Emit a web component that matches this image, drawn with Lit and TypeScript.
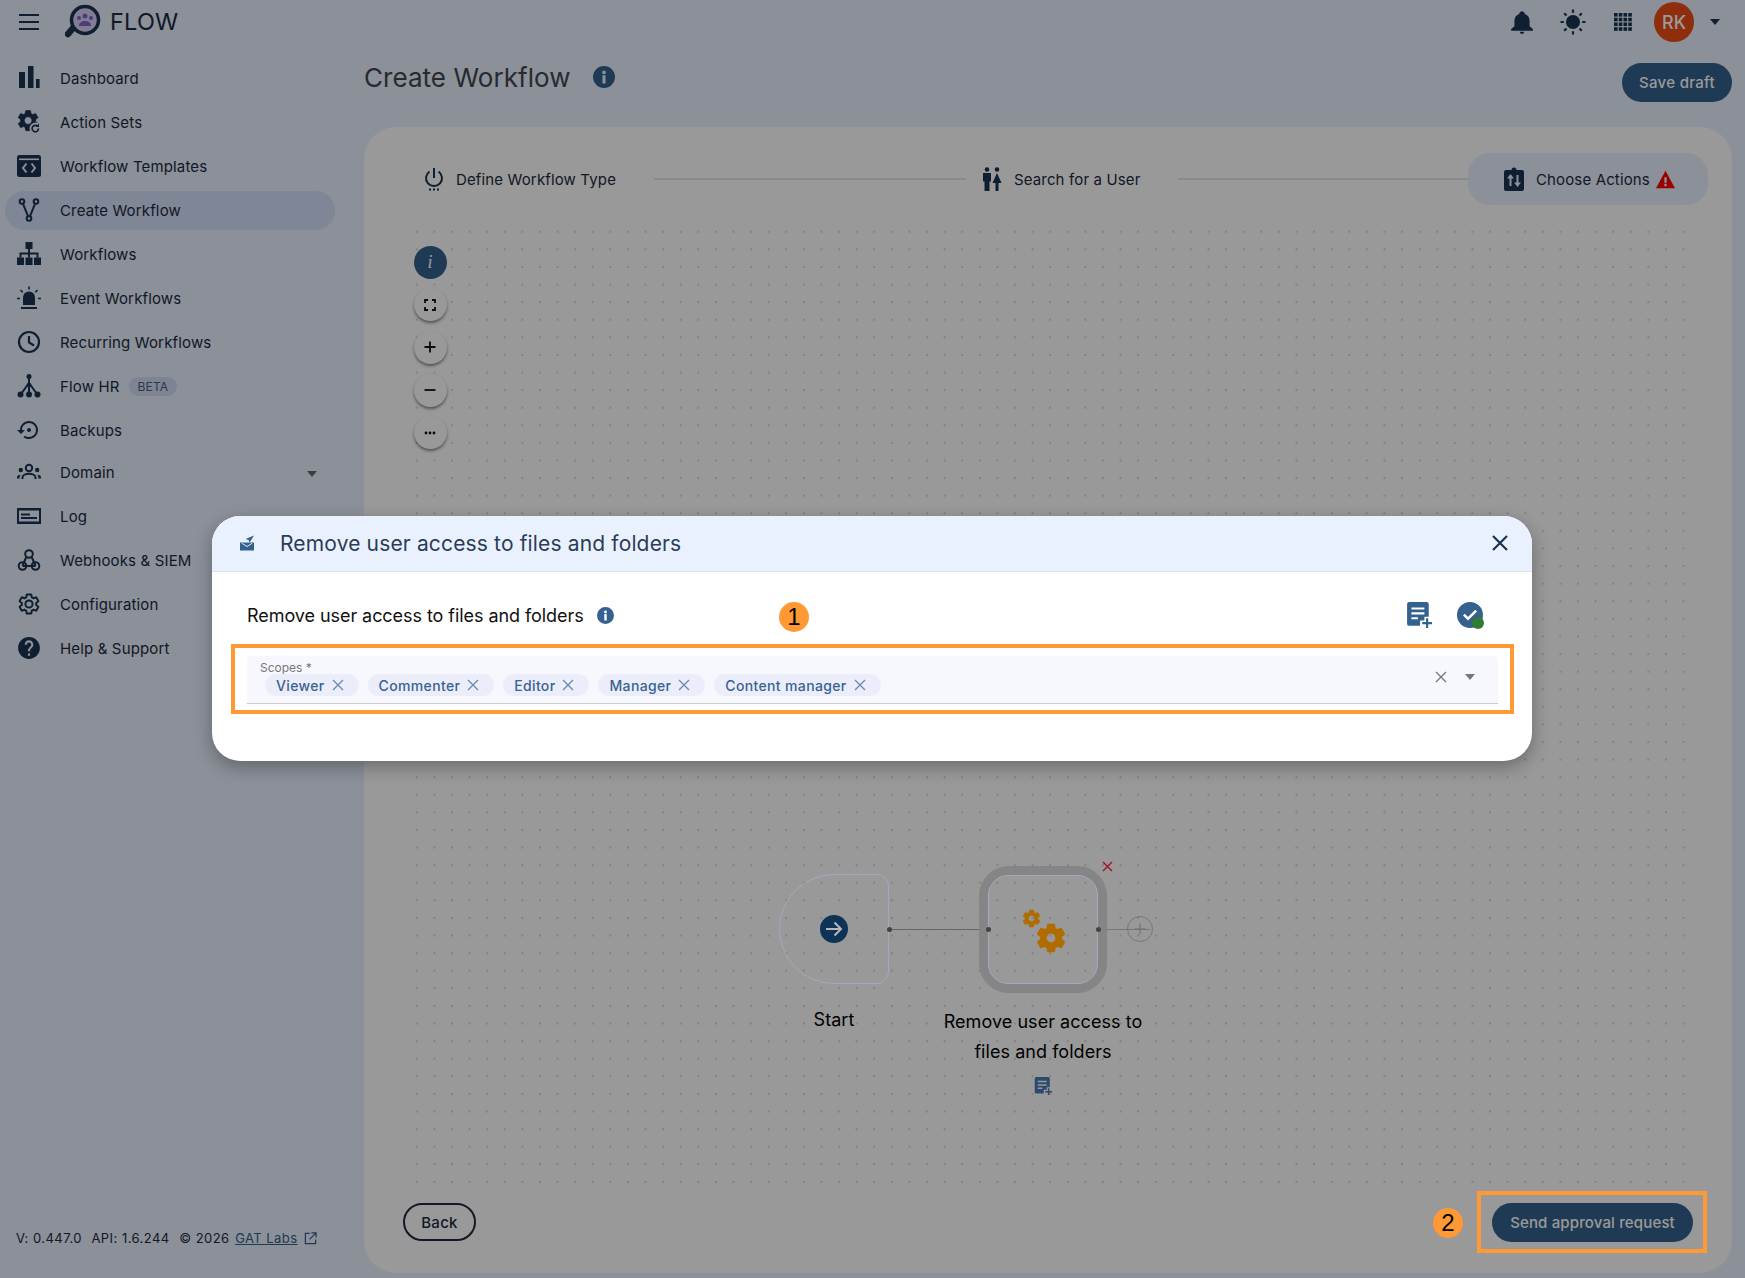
import { LitElement, html, css } from 'lit';
import { customElement } from 'lit/decorators.js';

const GEAR = 'M19.14 12.94c.04-.3.06-.61.06-.94 0-.32-.02-.64-.07-.94l2.03-1.58c.18-.14.23-.41.12-.61l-1.92-3.32c-.12-.22-.37-.29-.59-.22l-2.39.96c-.5-.38-1.03-.7-1.62-.94l-.36-2.54c-.04-.24-.24-.41-.48-.41h-3.84c-.24 0-.43.17-.47.41l-.36 2.54c-.59.24-1.13.57-1.62.94l-2.39-.96c-.22-.08-.47 0-.59.22L2.74 8.87c-.12.21-.08.47.12.61l2.03 1.58c-.05.3-.09.63-.09.94s.02.64.07.94l-2.03 1.58c-.18.14-.23.41-.12.61l1.92 3.32c.12.22.37.29.59.22l2.39-.96c.5.38 1.03.7 1.62.94l.36 2.54c.05.24.24.41.48.41h3.84c.24 0 .44-.17.47-.41l.36-2.54c.59-.24 1.13-.56 1.62-.94l2.39.96c.22.08.47 0 .59-.22l1.92-3.32c.12-.22.07-.47-.12-.61l-2.01-1.58zM12 15.6c-1.98 0-3.6-1.62-3.6-3.6s1.62-3.6 3.6-3.6 3.6 1.62 3.6 3.6-1.62 3.6-3.6 3.6z';
const DOC_PLUS = 'M3 0h16a2 2 0 0 1 2 2v11.500h-4V17h-4v5H3a2 2 0 0 1-2-2V2a2 2 0 0 1 2-2zm2 5v2h12V5H5zm0 4.500v2h12v-2H5zM5 14v2h6v-2H5z';
const PLUS = 'M18.500 15h2v3.500H24v2h-3.500V24h-2v-3.500H15v-2h3.500z';

const icon = (content: unknown, cls = 'ico') =>
  html`<svg class=${cls} viewBox="0 0 24 24" fill="currentColor">${content}</svg>`;

const navItems = [
  { label: 'Dashboard', icon: icon(html`<svg width="24" height="24"><rect x="2" y="6" width="6" height="16"/><rect x="11" y="0" width="5.500" height="22"/><rect x="19" y="13" width="3.600" height="9"/></svg>`) },
  { label: 'Action Sets', icon: icon(html`<svg viewBox="0 0 24 24"><g transform="translate(-1.500 -2) scale(1.050)"><path fill-rule="evenodd" stroke="currentColor" stroke-width=".6" d=${GEAR}/></g><circle cx="18.500" cy="18.500" r="6" fill="#e8f0ff"/><path d="M21.500 18.500a3.200 3.200 0 1 1-1-2.300" fill="none" stroke="currentColor" stroke-width="1.600"/><path d="M22 13.500v3.600h-3.600z"/></svg>`) },
  { label: 'Workflow Templates', icon: icon(html`<svg viewBox="0 0 24 24"><rect x="0" y="1" width="24" height="22" rx="2.500"/><rect x="2" y="4.500" width="20" height="1.600" fill="#e8f0ff"/><path d="M9.500 9.500 6 14l3.500 4.500M14.500 9.500 18 14l-3.500 4.500" fill="none" stroke="#e8f0ff" stroke-width="2"/></svg>`) },
  { label: 'Create Workflow', active: true, icon: icon(html`<svg viewBox="0 0 24 24" fill="none" stroke="currentColor" stroke-width="2"><circle cx="5" cy="3.500" r="2.300"/><circle cx="19" cy="3.500" r="2.300"/><circle cx="12" cy="20.500" r="2.300"/><path d="M6 5.800 11 18.200M18 5.800 13 18.200"/></svg>`) },
  { label: 'Workflows', icon: icon(html`<svg viewBox="0 0 24 24"><rect x="8.500" y="0" width="7" height="7"/><rect x="0" y="15.500" width="7" height="7.500"/><rect x="8.500" y="15.500" width="7" height="7.500"/><rect x="17" y="15.500" width="7" height="7.500"/><path d="M11 7h2v3.500h8.500v5h-2v-3h-6.500v3h-2v-3H4.500v3h-2v-5H11z"/></svg>`) },
  { label: 'Event Workflows', icon: icon(html`<svg viewBox="0 0 24 24"><path d="M6 19v-7.500a6 6 0 0 1 12 0V19z"/><rect x="4" y="21" width="16" height="2"/><path d="M12 .5v3M3.500 4l2.200 2.200M20.500 4l-2.200 2.200M0 12.500h3M21 12.500h3" stroke="currentColor" stroke-width="1.600"/></svg>`) },
  { label: 'Recurring Workflows', icon: icon(html`<svg viewBox="0 0 24 24" fill="none" stroke="currentColor" stroke-width="2.200"><circle cx="12" cy="12" r="10"/><path d="M12 6v6.500l5 3"/></svg>`) },
  { label: 'Flow HR', beta: true, icon: icon(html`<svg viewBox="0 0 24 24"><path d="M12 2v18M12 9 4 20M12 9l8 11" fill="none" stroke="currentColor" stroke-width="2"/><circle cx="12" cy="2.500" r="2.500"/><circle cx="12" cy="11" r="2.300"/><circle cx="3.500" cy="20.500" r="3"/><circle cx="12" cy="20.500" r="3"/><circle cx="20.500" cy="20.500" r="3"/></svg>`) },
  { label: 'Backups', icon: icon(html`<svg viewBox="0 0 24 24"><path d="M14 12c0-1.100-.9-2-2-2s-2 .9-2 2 .9 2 2 2 2-.9 2-2zm-2-9c-4.970 0-9 4.030-9 9H0l4 4 4-4H5c0-3.870 3.130-7 7-7s7 3.130 7 7-3.130 7-7 7c-1.510 0-2.910-.49-4.060-1.300l-1.420 1.440C8.040 20.300 9.940 21 12 21c4.970 0 9-4.030 9-9s-4.030-9-9-9z"/></svg>`) },
  { label: 'Domain', group: true, icon: icon(html`<svg viewBox="0 0 24 24"><circle cx="12" cy="8" r="3.200" fill="none" stroke="currentColor" stroke-width="2"/><circle cx="3.800" cy="10" r="2.200"/><circle cx="20.200" cy="10" r="2.200"/><path d="M5.500 19v-1.500c0-2.200 3-3.800 6.500-3.800s6.500 1.600 6.500 3.800V19" fill="none" stroke="currentColor" stroke-width="2"/><path d="M0 18.500v-1.200c0-1.300 1.400-2.300 3.500-2.500-.5.800-.9 1.700-.9 3.700zM24 18.500v-1.200c0-1.300-1.400-2.300-3.500-2.500.5.800.9 1.700.9 3.700z"/></svg>`) },
  { label: 'Log', icon: icon(html`<svg viewBox="0 0 24 24"><path fill-rule="evenodd" d="M0 4h24v16H0zM2 6.500v11h20v-11z"/><rect x="4" y="9.500" width="9" height="2"/><rect x="4" y="13" width="16" height="2"/></svg>`) },
  { label: 'Webhooks & SIEM', icon: icon(html`<svg viewBox="0 0 24 24" fill="none" stroke="currentColor" stroke-width="2"><circle cx="12" cy="6" r="3.800"/><circle cx="5.500" cy="18" r="3.800"/><circle cx="18.500" cy="18" r="3.800"/><path d="M9 9.500 5.500 18M15 9.500l3.500 8.500M5.500 18h13"/></svg>`) },
  { label: 'Configuration', icon: icon(html`<svg viewBox="0 0 24 24"><g fill="none" stroke="currentColor" stroke-width="2"><path d="M19.140 12.940c.04-.3.06-.61.06-.94 0-.32-.02-.64-.07-.94l2.030-1.580c.18-.14.23-.41.12-.61l-1.920-3.320c-.12-.22-.37-.29-.59-.22l-2.390.96c-.5-.38-1.030-.7-1.620-.94l-.36-2.540c-.04-.24-.24-.41-.48-.41h-3.840c-.24 0-.43.17-.47.41l-.36 2.540c-.59.24-1.130.57-1.620.94l-2.390-.96c-.22-.08-.47 0-.59.22L2.740 8.870c-.12.21-.08.47.12.61l2.030 1.580c-.05.3-.09.63-.09.94s.02.64.07.94l-2.030 1.580c-.18.14-.23.41-.12.61l1.920 3.320c.12.22.37.29.59.22l2.390-.96c.5.38 1.030.7 1.620.94l.36 2.540c.05.24.24.41.48.41h3.840c.24 0 .44-.17.47-.41l.36-2.540c.59-.24 1.130-.56 1.620-.94l2.390.96c.22.08.47 0 .59-.22l1.920-3.320c.12-.22.07-.47-.12-.61z"/><circle cx="12" cy="12" r="3.600"/></g></svg>`) },
  { label: 'Help & Support', icon: icon(html`<svg viewBox="1 1 22 22"><path d="M12 2C6.480 2 2 6.480 2 12s4.480 10 10 10 10-4.480 10-10S17.520 2 12 2zm1 17h-2v-2h2v2zm2.070-7.750l-.9.920C13.450 12.900 13 13.500 13 15h-2v-.5c0-1.100.45-2.100 1.170-2.830l1.240-1.260c.37-.36.59-.86.59-1.410 0-1.100-.9-2-2-2s-2 .9-2 2H8c0-2.210 1.790-4 4-4s4 1.790 4 4c0 .88-.36 1.680-.93 2.250z"/></svg>`) },
];

const scopes = ['Viewer', 'Commenter', 'Editor', 'Manager', 'Content manager'];

@customElement('app-root')
export class AppRoot extends LitElement {
  static styles = css`
    :host {
      display: block;
      font-family: Inter, 'Liberation Sans', sans-serif;
      color: #1d2b3f;
    }
    * { box-sizing: border-box; }
    svg { display: block; flex: none; }
    .shell {
      position: relative;
      height: 1278px;
      overflow: hidden;
      background: #e8f0ff;
      display: grid;
      grid-template-columns: 364px minmax(0, 1fr);
      grid-template-rows: 44px minmax(0, 1fr);
    }
    .topbar {
      grid-column: 1 / 3;
      display: flex;
      align-items: center;
      padding-left: 19px;
      color: #1a3350;
    }
    .burger { width: 20px; display: flex; flex-direction: column; gap: 4.500px; }
    .burger span { height: 2.500px; background: #1a3350; }
    .logo { width: 38px; height: 38px; margin-left: 26px; }
    .brand { font-size: 23.500px; margin: 0 0 2px 7px; letter-spacing: .2px; color: #1d2b3f; }
    .top-right { margin-left: auto; display: flex; align-items: center; padding-right: 25px; }
    .top-right .bell { width: 26px; height: 26px; }
    .top-right .sun { width: 26px; height: 26px; margin-left: 25px; }
    .top-right .apps { width: 18px; height: 18px; margin-left: 28px; }
    .avatar {
      width: 40px;
      height: 40px;
      margin-left: 22px;
      border-radius: 50%;
      background: #ef4d16;
      color: #fff;
      font-size: 18px;
      font-weight: 500;
      display: flex;
      align-items: center;
      justify-content: center;
    }
    .caret { width: 0; height: 0; border: 5.500px solid transparent; border-top: 6px solid #1a3350; border-bottom: 0; }
    .top-right .caret { margin-left: 16px; }

    .sidebar { display: flex; flex-direction: column; padding: 14.500px 29px 0 5px; }
    .nav { display: flex; flex-direction: column; gap: 5px; }
    .item {
      height: 39px;
      padding-left: 12px;
      border-radius: 20px;
      display: flex;
      align-items: center;
      gap: 19px;
      font-size: 15px;
      letter-spacing: .15px;
      white-space: nowrap;
    }
    .item.active { background: #d4dff8; }
    .item.group { height: 37px; padding-bottom: 2px; }
    .item.group .caret { margin-left: auto; margin-right: 18px; border-top-color: #666; margin-top: 3px; }
    .ico { width: 24px; height: 24px; color: #1a3350; }
    .beta {
      margin-left: -10px;
      padding: 0 9px;
      height: 19px;
      line-height: 19px;
      border-radius: 10px;
      font-size: 12px;
      background: #d4dcf8;
      color: #4a6182;
    }
    .foot {
      margin-top: auto;
      padding: 0 0 31px 11px;
      display: flex;
      align-items: center;
      font-size: 13px;
      line-height: 18px;
      letter-spacing: .46px;
      white-space: nowrap;
    }
    .foot span { margin-right: 9.500px; }
    .foot a { color: #34618e; text-decoration: underline; margin-left: -4px; }
    .foot svg { width: 13px; height: 13px; margin-left: 6px; color: #34618e; }

    .main { display: flex; flex-direction: column; padding: 0 13px 5px 0; min-height: 0; min-width: 0; }
    .title-row { height: 83px; flex: none; display: flex; align-items: flex-start; }
    h1 {
      margin: 16px 0 0;
      font-size: 26px;
      line-height: 36px;
      font-weight: 400;
      letter-spacing: .05px;
      color: #44474e;
    }
    .title-row .info { width: 22px; height: 22px; margin: 22px 0 0 22px; }
    .info { color: #34618e; }
    .btn {
      height: 39px;
      border-radius: 20px;
      border: 0;
      padding: 0;
      font: 500 15px Inter, 'Liberation Sans', sans-serif;
      letter-spacing: .3px;
      display: flex;
      align-items: center;
      justify-content: center;
    }
    .btn.fill { background: #34618e; color: #fff; }
    .title-row .btn { width: 110px; margin: 19px 0 0 auto; }

    .panel {
      flex: 1;
      min-height: 0;
      background: #fff;
      border-radius: 32px;
      display: flex;
      flex-direction: column;
    }
    .stepper { display: flex; align-items: center; height: 52px; margin: 26px 24px 0 60px; flex: none; }
    .step { display: flex; align-items: center; gap: 12px; font-size: 15px; letter-spacing: .14px; white-space: nowrap; flex: none; }
    .step svg { width: 20px; height: 24px; color: #1a3350; }
    .line { height: 2px; background: #e4e4e4; }
    .line.a { flex: none; width: 312px; margin: 0 16px 0 38px; }
    .line.b { flex: 1; margin-left: 38px; }
    .step.current {
      width: 240px;
      height: 52px;
      padding-left: 36px;
      border-radius: 22px;
      background: #e8f0ff;
    }
    .step.current .warn { width: 19px; height: 19px; color: #ff0000; margin-left: -6px; }

    .canvas {
      position: relative;
      flex: none;
      width: 1285px;
      height: 968px;
      margin: 18px 0 0 44px;
      padding: 22.500px 0 0 5.500px;
      background-image: radial-gradient(circle, #cdcdcd .6px, transparent 1px);
      background-size: 17.600px 17.600px;
      display: flex;
      flex-direction: column;
      gap: 9.700px;
    }
    .ctl {
      width: 33px;
      height: 33px;
      border-radius: 50%;
      background: #fff;
      box-shadow: 0 2px 3px rgba(0, 0, 0, .45);
      display: flex;
      align-items: center;
      justify-content: center;
      color: #111;
    }
    .ctl svg { width: 18px; height: 18px; }
    .ctl.on {
      background: #34618e;
      box-shadow: none;
      color: #fff;
      font: italic 400 18px 'Liberation Serif', serif;
    }

    .diagram { position: absolute; inset: 0; z-index: 2; }
    .diagram > * { position: absolute; }
    .start {
      left: 371px;
      top: 651px;
      width: 110px;
      height: 110px;
      border: 1px solid #a0aabf;
      border-radius: 55px 12px 12px 55px;
      display: flex;
      align-items: center;
      justify-content: center;
    }
    .start svg { width: 28px; height: 28px; }
    .action {
      left: 571px;
      top: 643px;
      width: 128px;
      height: 127px;
      border: 9px solid #858585;
      border-radius: 30px;
    }
    .action .inner {
      height: 100%;
      border: 1px solid #a0aabf;
      border-radius: 20px;
      position: relative;
    }
    .action svg { position: absolute; color: #b06c00; }
    .action .g1 { width: 21px; height: 21px; left: 32px; top: 32px; }
    .action .g2 { width: 34px; height: 34px; left: 45px; top: 45px; }
    .label { text-align: center; color: #000; font-size: 18px; line-height: 30px; letter-spacing: .05px; }
    .label.s { left: 371px; width: 110px; top: 782px; }
    .label.r { left: 495px; width: 280px; top: 784px; }
    .wire { height: 1px; background: #666; top: 706px; }
    .wire.a { left: 481px; width: 99px; }
    .wire.b { left: 690px; width: 52px; background: #777; }
    .pin { width: 5px; height: 5px; border-radius: 50%; background: #444; top: 704px; }
    .pin.a { left: 479px; }
    .pin.b { left: 578px; }
    .pin.c { left: 688px; }
    .plus { left: 719px; top: 693px; width: 26px; height: 26px; color: #777; }
    .remove { left: 694px; top: 638px; width: 11px; height: 11px; color: #a01030; }
    .note { left: 626px; top: 854px; width: 18px; height: 18px; color: #2c4a6d; }

    .actions {
      flex: none;
      display: flex;
      justify-content: space-between;
      margin: 12px 39px 0;
    }
    .btn.back { width: 73px; height: 38px; background: transparent; border: 2px solid #1d2b3f; color: #1d2b3f; }
    .actions .fill { width: 201px; letter-spacing: .15px; }

    .scrim { position: absolute; inset: 0; background: rgba(0, 0, 0, .4); z-index: 1; }
    .modal {
      position: absolute;
      left: 212px;
      top: 516px;
      width: 1320px;
      height: 245px;
      z-index: 3;
      background: #fff;
      border-radius: 28px;
      box-shadow: 0 6px 18px rgba(0, 0, 0, .3);
      overflow: hidden;
    }
    .m-head {
      height: 56px;
      background: #eaf1fe;
      border-bottom: 1px solid #dfe3ea;
      display: flex;
      align-items: center;
      padding: 0 20px 1px 27px;
      font-size: 21px;
      letter-spacing: .15px;
      color: #2a3d57;
    }
    .m-head .mail { width: 16px; height: 16px; margin-right: 25px; color: #34618e; }
    .m-head .close { width: 24px; height: 24px; margin-left: auto; color: #1a3350; }
    .m-row {
      position: relative;
      height: 40px;
      margin-top: 23px;
      padding: 0 49px 0 35px;
      display: flex;
      align-items: center;
      font-size: 18px;
      letter-spacing: -.06px;
      color: #111;
    }
    .m-row .info { width: 17px; height: 17px; margin-left: 13px; }
    .m-tools { margin-left: auto; display: flex; align-items: center; gap: 25px; }
    .m-tools .doc { width: 26px; height: 26px; color: #34618e; }
    .check { position: relative; width: 26px; height: 26px; }
    .check svg { width: 26px; height: 26px; color: #34618e; }
    .check i { position: absolute; left: 15px; top: 15px; width: 12px; height: 12px; border-radius: 50%; background: #2e7d32; }
    .num {
      width: 30px;
      height: 30px;
      border-radius: 50%;
      background: #ff9933;
      color: #000;
      font: 24px 'Liberation Sans', sans-serif;
      display: flex;
      align-items: center;
      justify-content: center;
      position: absolute;
    }
    .m-row .num { left: 567px; top: 7px; }
    .mark { border: 4px solid #ff9933; }
    .m-box { margin: 9px 18px 0 19px; padding: 8px 12px 6px; }
    .field {
      height: 48px;
      background: #f7f8fe;
      border-bottom: 1px solid #ccc;
      border-radius: 4px 4px 0 0;
      padding: 5px 23px 0 13px;
      display: flex;
    }
    .f-main { flex: 1; }
    .f-label { font-size: 12px; line-height: 13px; color: #777; }
    .chips { display: flex; gap: 9px; margin-left: 5px; }
    .chip {
      height: 22px;
      padding: 0 13px 0 11px;
      border-radius: 11px;
      background: #ebeefa;
      color: #3a6290;
      display: flex;
      align-items: center;
      gap: 5px;
      font-size: 14px;
      font-weight: 500;
      letter-spacing: .35px;
      white-space: nowrap;
    }
    .chip svg { width: 16px; height: 16px; color: #6c87a8; }
    .f-end { display: flex; align-items: center; gap: 16px; height: 32px; }
    .f-end svg { width: 16px; height: 16px; color: #777; }
    .f-end .caret { border-top-color: #777; }
    .mark.send { position: absolute; left: 1477px; top: 1191px; width: 230px; height: 62px; z-index: 3; }
    .num.two { left: 1433px; top: 1208px; z-index: 3; }
  `;

  render() {
    const x = html`<svg viewBox="0 0 16 16" fill="none" stroke="currentColor" stroke-width="1.300"><path d="M3 3l10 10M13 3 3 13"/></svg>`;
    const info = () => html`<svg class="info" viewBox="0 0 24 24" fill="currentColor"><path fill-rule="evenodd" d="M12 0a12 12 0 1 1 0 24 12 12 0 0 1 0-24zm-1.700 10v9h3.400v-9zm1.700-5a2 2 0 1 0 0 4 2 2 0 0 0 0-4z"/></svg>`;
    return html`
      <div class="shell">
        <header class="topbar">
          <div class="burger"><span></span><span></span><span></span></div>
          <svg class="logo" viewBox="0 0 38 38">
            <path d="M9 24 3 31" stroke="#1a3350" stroke-width="6.500" stroke-linecap="round"/>
            <circle cx="20" cy="17" r="13.500" fill="#d9d0f5" stroke="#1a3350" stroke-width="3.500"/>
            <g fill="#7d66c8"><circle cx="20" cy="13" r="2.500"/><circle cx="14" cy="15" r="2"/><circle cx="26" cy="15" r="2"/><path d="M14 23c0-3 2-5 6-5s6 2 6 5z"/></g>
          </svg>
          <span class="brand">FLOW</span>
          <div class="top-right">
            <svg class="bell" viewBox="0 0 24 24" fill="currentColor"><path d="M12 23c1.100 0 2-.9 2-2h-4c0 1.100.89 2 2 2zm7-7v-5c0-3.070-1.640-5.640-4.500-6.320V4c0-.83-1.670-2-2.500-2s-2.500 1.170-2.500 2v.68C6.630 5.360 5 7.920 5 11v5l-3 2.500V20h20v-1.500l-3-2.500z"/></svg>
            <svg class="sun" viewBox="0 0 24 24" fill="currentColor"><circle cx="12" cy="12" r="6.500"/><path d="M12 .5v3M12 20.500v3M.5 12h3M20.500 12h3M3.900 3.900 6 6M18 18l2.100 2.100M3.900 20.100 6 18M18 6l2.100-2.100" stroke="currentColor" stroke-width="2"/></svg>
            <svg class="apps" viewBox="0 0 19 19" fill="currentColor">
              ${[0, 5, 10, 15].map(a => [0, 5, 10, 15].map(b => html`<svg><rect x=${a} y=${b} width="3.800" height="3.800"/></svg>`))}
            </svg>
            <div class="avatar">RK</div>
            <div class="caret"></div>
          </div>
        </header>

        <aside class="sidebar">
          <nav class="nav">
            ${navItems.map(n => html`
              <div class="item ${n.active ? 'active' : ''} ${n.group ? 'group' : ''}">
                ${n.icon}<span>${n.label}</span>
                ${n.beta ? html`<span class="beta">BETA</span>` : ''}
                ${n.group ? html`<div class="caret"></div>` : ''}
              </div>`)}
          </nav>
          <div class="foot">
            <span>V: 0.447.0</span><span>API: 1.6.244</span><span>© 2026</span><a>GAT Labs</a>
            <svg viewBox="0 0 14 14" fill="none" stroke="currentColor" stroke-width="1.300"><path d="M6 1.500H1.500v11h11V8M8 1h5v5M13 1 6 8"/></svg>
          </div>
        </aside>

        <main class="main">
          <div class="title-row">
            <h1>Create Workflow</h1>
            ${info()}
            <button class="btn fill">Save draft</button>
          </div>
          <section class="panel">
            <div class="stepper">
              <div class="step">
                <svg viewBox="0 0 20 24" fill="none" stroke="currentColor" stroke-width="2"><path d="M10 1v10M5.500 4.500a8 8 0 1 0 9 0"/><path d="M5 22.500h2M9 22.500h2M13 22.500h2"/></svg>
                Define Workflow Type
              </div>
              <div class="line a"></div>
              <div class="step">
                <svg viewBox="0 0 20 24" fill="currentColor"><circle cx="5" cy="2.500" r="2.300"/><circle cx="15" cy="2.500" r="2.300"/><path d="M1 6h8v8.500H7.500V24h-5v-9.500H1zM15 6l4.500 10h-3v8h-3v-8h-3z"/></svg>
                Search for a User
              </div>
              <div class="line b"></div>
              <div class="step current">
                <svg viewBox="0 0 20 24" fill="currentColor"><path fill-rule="evenodd" d="M2 3h5.500a2.500 2.500 0 0 1 5 0H18a2 2 0 0 1 2 2v17a2 2 0 0 1-2 2H2a2 2 0 0 1-2-2V5a2 2 0 0 1 2-2zm4.500 4L3 11.500h2.500V19h2v-7.500H10zM12.500 8v7.500H10l3.500 4.500 3.500-4.500h-2.500V8z"/></svg>
                Choose Actions
                <svg class="warn" viewBox="0 0 24 24" fill="currentColor"><path fill-rule="evenodd" d="M12 1 24 23H0zm-1.500 8v7h3V9zm0 8.500v3h3v-3z"/></svg>
              </div>
            </div>

            <div class="canvas">
              <div class="ctl on">i</div>
              <div class="ctl"><svg viewBox="0 0 18 18" fill="none" stroke="currentColor" stroke-width="1.800"><path d="M4 7V4h3M11 4h3v3M14 11v3h-3M7 14H4v-3"/></svg></div>
              <div class="ctl"><svg viewBox="0 0 18 18" fill="none" stroke="currentColor" stroke-width="1.800"><path d="M9 3.500v11M3.500 9h11"/></svg></div>
              <div class="ctl"><svg viewBox="0 0 18 18" fill="none" stroke="currentColor" stroke-width="1.800"><path d="M3.500 9h11"/></svg></div>
              <div class="ctl"><svg viewBox="0 0 18 18" fill="currentColor"><circle cx="5" cy="9" r="1.400"/><circle cx="9" cy="9" r="1.400"/><circle cx="13" cy="9" r="1.400"/></svg></div>

              <div class="diagram">
                <div class="wire a"></div>
                <div class="wire b"></div>
                <div class="start">
                  <svg viewBox="0 0 28 28"><circle cx="14" cy="14" r="14" fill="#0f3357"/><path d="M6 14h15M14.500 7.500 21 14l-6.500 6.500" fill="none" stroke="#b4b8bd" stroke-width="2"/></svg>
                </div>
                <div class="label s">Start</div>
                <div class="action">
                  <div class="inner">
                    <svg class="g1" viewBox="0 0 24 24" fill="currentColor"><path fill-rule="evenodd" stroke="currentColor" stroke-width="1" d=${GEAR}/></svg>
                    <svg class="g2" viewBox="0 0 24 24" fill="currentColor"><path fill-rule="evenodd" stroke="currentColor" stroke-width="1" d=${GEAR}/></svg>
                  </div>
                </div>
                <div class="pin a"></div>
                <div class="pin b"></div>
                <div class="pin c"></div>
                <svg class="plus" viewBox="0 0 26 26" fill="none" stroke="currentColor"><circle cx="13" cy="13" r="12.500"/><path d="M13 7.500v11M7.500 13h11" stroke-width="1.400"/></svg>
                <svg class="remove" viewBox="0 0 11 11" fill="none" stroke="currentColor" stroke-width="1.400"><path d="M1 1l9 9M10 1l-9 9"/></svg>
                <div class="label r">Remove user access to<br />files and folders</div>
                <svg class="note" viewBox="0 0 24 24" fill="currentColor"><path fill-rule="evenodd" d=${DOC_PLUS}/><path d=${PLUS}/></svg>
              </div>
            </div>

            <div class="actions">
              <button class="btn back">Back</button>
              <button class="btn fill">Send approval request</button>
            </div>
          </section>
        </main>

        <div class="scrim"></div>

        <div class="modal">
          <div class="m-head">
            <svg class="mail" viewBox="0 0 16 16" fill="currentColor"><path fill-rule="evenodd" d="M1 7.500h14V15.500H1zM2.500 8.500 8 12l5.500-3.500-.6-.6L8 11 3.100 7.900z"/><path d="M15 .5 6.500 4l3 1 1.200 2.500z"/></svg>
            Remove user access to files and folders
            <svg class="close" viewBox="0 0 24 24" fill="none" stroke="currentColor" stroke-width="2.200"><path d="M5 5l14 14M19 5 5 19"/></svg>
          </div>
          <div class="m-row">
            Remove user access to files and folders
            ${info()}
            <div class="num">1</div>
            <div class="m-tools">
              <svg class="doc" viewBox="0 0 24 24" fill="currentColor"><path fill-rule="evenodd" d=${DOC_PLUS}/><path d=${PLUS}/></svg>
              <div class="check">
                <svg viewBox="0 0 26 26" fill="currentColor"><path fill-rule="evenodd" d="M13 0a13 13 0 1 1 0 26 13 13 0 0 1 0-26zM6 13.500l5 5 9-9-1.800-1.800-7.200 7.200-3.200-3.200z"/></svg>
                <i></i>
              </div>
            </div>
          </div>
          <div class="mark m-box">
            <div class="field">
              <div class="f-main">
                <div class="f-label">Scopes *</div>
                <div class="chips">
                  ${scopes.map(s => html`<div class="chip">${s}${x}</div>`)}
                </div>
              </div>
              <div class="f-end">${x}<div class="caret"></div></div>
            </div>
          </div>
        </div>

        <div class="mark send"></div>
        <div class="num two">2</div>
      </div>
    `;
  }
}
